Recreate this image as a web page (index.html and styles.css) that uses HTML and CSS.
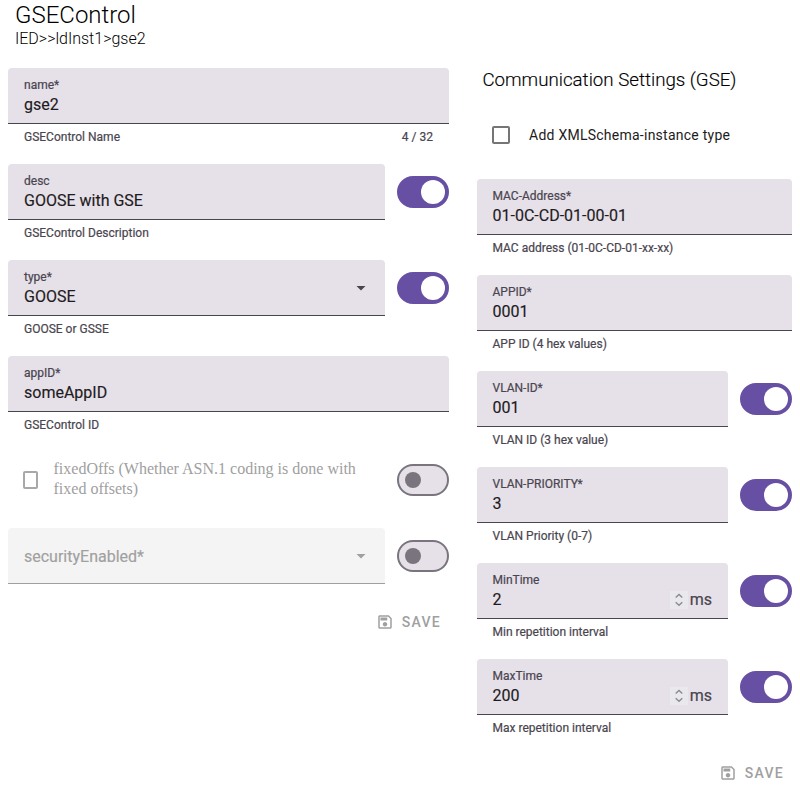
FILE: index.html
```html
<!DOCTYPE html>
<html lang="en">
<head>
<meta charset="utf-8">
<title>GSEControl</title>
<link rel="stylesheet" href="styles.css">
</head>
<body>
<svg class="defs" width="0" height="0">
  <symbol id="save" viewBox="0 0 24 24"><path d="M17 3H5c-1.11 0-2 .9-2 2v14c0 1.1.89 2 2 2h14c1.1 0 2-.9 2-2V7l-4-4zm2 16H5V5h11.17L19 7.83V19zm-7-7c-1.66 0-3 1.34-3 3s1.34 3 3 3 3-1.34 3-3-1.34-3-3-3zM6 6h9v4H6z"/></symbol>
  <symbol id="spin" viewBox="0 0 18 18"><path d="M5.7 6.6 9 3.5l3.3 3.1M5.7 11.2 9 14.3l3.3-3.1" fill="none" stroke="#8c8b90" stroke-width="1.4"/></symbol>
</svg>
<header class="header">
  <h1 class="title"><span>GSEControl</span></h1>
  <p class="path"><span>IED&gt;&gt;ldInst1&gt;gse2</span></p>
</header>
<main class="content">
  <section class="column">
    <div class="row">
      <div class="field">
        <div class="box"><span class="label">name*</span><span class="value">gse2</span></div>
        <div class="support"><span>GSEControl Name</span><span class="counter">4 / 32</span></div>
      </div>
    </div>
    <div class="row">
      <div class="field">
        <div class="box"><span class="label">desc</span><span class="value">GOOSE with GSE</span></div>
        <div class="support"><span>GSEControl Description</span></div>
      </div>
      <div class="switch on"><i></i></div>
    </div>
    <div class="row">
      <div class="field">
        <div class="box select"><div><span class="label">type*</span><span class="value">GOOSE</span></div><i class="arrow"></i></div>
        <div class="support"><span>GOOSE or GSSE</span></div>
      </div>
      <div class="switch on"><i></i></div>
    </div>
    <div class="row">
      <div class="field">
        <div class="box"><span class="label">appID*</span><span class="value">someAppID</span></div>
        <div class="support"><span>GSEControl ID</span></div>
      </div>
    </div>
    <div class="row">
      <div class="check-field"><i class="checkbox narrow"></i><span class="check-text">fixedOffs (Whether ASN.1 coding is done with fixed offsets)</span></div>
      <div class="switch"><i></i></div>
    </div>
    <div class="row">
      <div class="field">
        <div class="box select disabled"><span class="value">securityEnabled*</span><i class="arrow"></i></div>
      </div>
      <div class="switch"><i></i></div>
    </div>
    <div class="save"><svg><use href="#save"/></svg><span>SAVE</span></div>
  </section>
  <section class="column gse">
    <h2 class="subtitle"><span>Communication Settings (GSE)</span></h2>
    <div class="formfield"><i class="checkbox"></i><span>Add XMLSchema-instance type</span></div>
    <div class="row">
      <div class="field">
        <div class="box"><span class="label">MAC-Address*</span><span class="value">01-0C-CD-01-00-01</span></div>
        <div class="support"><span>MAC address (01-0C-CD-01-xx-xx)</span></div>
      </div>
    </div>
    <div class="row">
      <div class="field">
        <div class="box"><span class="label">APPID*</span><span class="value">0001</span></div>
        <div class="support"><span>APP ID (4 hex values)</span></div>
      </div>
    </div>
    <div class="row">
      <div class="field">
        <div class="box"><span class="label">VLAN-ID*</span><span class="value">001</span></div>
        <div class="support"><span>VLAN ID (3 hex value)</span></div>
      </div>
      <div class="switch on"><i></i></div>
    </div>
    <div class="row">
      <div class="field">
        <div class="box"><span class="label">VLAN-PRIORITY*</span><span class="value">3</span></div>
        <div class="support"><span>VLAN Priority (0-7)</span></div>
      </div>
      <div class="switch on"><i></i></div>
    </div>
    <div class="row">
      <div class="field">
        <div class="box"><span class="label">MinTime</span><div class="number"><span class="value">2</span><svg class="spin"><use href="#spin"/></svg><span class="unit">ms</span></div></div>
        <div class="support"><span>Min repetition interval</span></div>
      </div>
      <div class="switch on"><i></i></div>
    </div>
    <div class="row">
      <div class="field">
        <div class="box"><span class="label">MaxTime</span><div class="number"><span class="value">200</span><svg class="spin"><use href="#spin"/></svg><span class="unit">ms</span></div></div>
        <div class="support"><span>Max repetition interval</span></div>
      </div>
      <div class="switch on"><i></i></div>
    </div>
    <div class="save"><svg><use href="#save"/></svg><span>SAVE</span></div>
  </section>
</main>
</body>
</html>
```
FILE: styles.css
```css
* { box-sizing: border-box; }
body { margin: 0; background: #fff; font-family: Roboto, sans-serif; color: #1d1b20; }
.defs { display: block; }
.header { height: 68px; padding: 1px 0 0 15px; color: #000; }
.title { margin: 0; font-size: 24px; font-weight: 300; line-height: 28px; }
.path { margin: 0; font-size: 16px; font-weight: 300; line-height: 20px; }
.content { display: grid; grid-template-columns: 441px 315px; column-gap: 28px; padding: 0 8px; }
.column { display: flex; flex-direction: column; gap: 20px; min-width: 0; }
.row { display: flex; gap: 12px; align-items: flex-start; }
.field { flex: 1; min-width: 0; }
.box { height: 56px; padding: 9px 16px 6px; background: #e6e0e9; border-bottom: 1px solid #49454f; border-radius: 4px 4px 0 0; }
.label, .value { display: block; }
.label { font-size: 12px; line-height: 16px; color: #49454f; -webkit-text-stroke: 0.2px; }
.value { font-size: 16px; line-height: 24px; -webkit-text-stroke: 0.15px; }
.select { display: flex; justify-content: space-between; align-items: center; }
.arrow { width: 10px; height: 5px; margin: 0 3px 2px 0; background: #49454f; clip-path: polygon(0 0, 100% 0, 50% 100%); }
.disabled { background: #f4f4f4; border-color: #a0a0a0; }
.disabled .value { color: #a0a0a0; }
.disabled .arrow { background: #a0a0a0; }
.support { display: flex; justify-content: space-between; padding: 5px 16px 0; height: 20px; font-size: 12px; line-height: 16px; color: #49454f; -webkit-text-stroke: 0.2px; }
.gse .box, .gse .support { padding-left: 15.5px; }
.switch { flex: none; width: 52px; height: 32px; margin-top: 12px; border: 2px solid #79747e; border-radius: 16px; background: #e6e0e9; padding: 6px; }
.switch i { display: block; width: 16px; height: 16px; border-radius: 50%; background: #79747e; }
.switch.on { background: #6750a4; border-color: #6750a4; padding: 2px 2px 2px 22px; }
.switch.on i { width: 24px; height: 24px; background: #fff; }
.check-field { flex: 1; display: flex; align-items: center; height: 56px; padding-left: 15px; color: #a0a0a0; }
.check-text { margin: -2px 12px 0 15.5px; font: 16px/20px "Liberation Serif", serif; }
.checkbox { flex: none; width: 18px; height: 18px; border: 2px solid #757575; border-radius: 2px; }
.checkbox.narrow { width: 15px; border-color: #a8a8a8; }
.save { display: flex; align-items: center; justify-content: flex-end; gap: 8px; height: 36px; padding-right: 8px; font-size: 14px; font-weight: 500; letter-spacing: 1.25px; color: #a0a0a0; }
.save svg { width: 18px; height: 18px; fill: currentColor; }
.subtitle { margin: 0 0 -20px; padding-left: 5.4px; height: 23px; font-size: 18.72px; font-weight: 300; line-height: 24px; color: #000; -webkit-text-stroke: 0.15px; }
.formfield { display: flex; align-items: center; gap: 19px; height: 88px; padding-left: 15px; font-size: 14px; letter-spacing: 0.25px; }
.formfield + .row { margin-top: -20px; }
.number { display: flex; align-items: center; height: 24px; }
.number .value { flex: 1; }
.spin { width: 18px; height: 18px; margin-right: 2px; background: #e9e8ec; }
.unit { font-size: 16px; line-height: 24px; color: #49454f; -webkit-text-stroke: 0.2px; }
```
